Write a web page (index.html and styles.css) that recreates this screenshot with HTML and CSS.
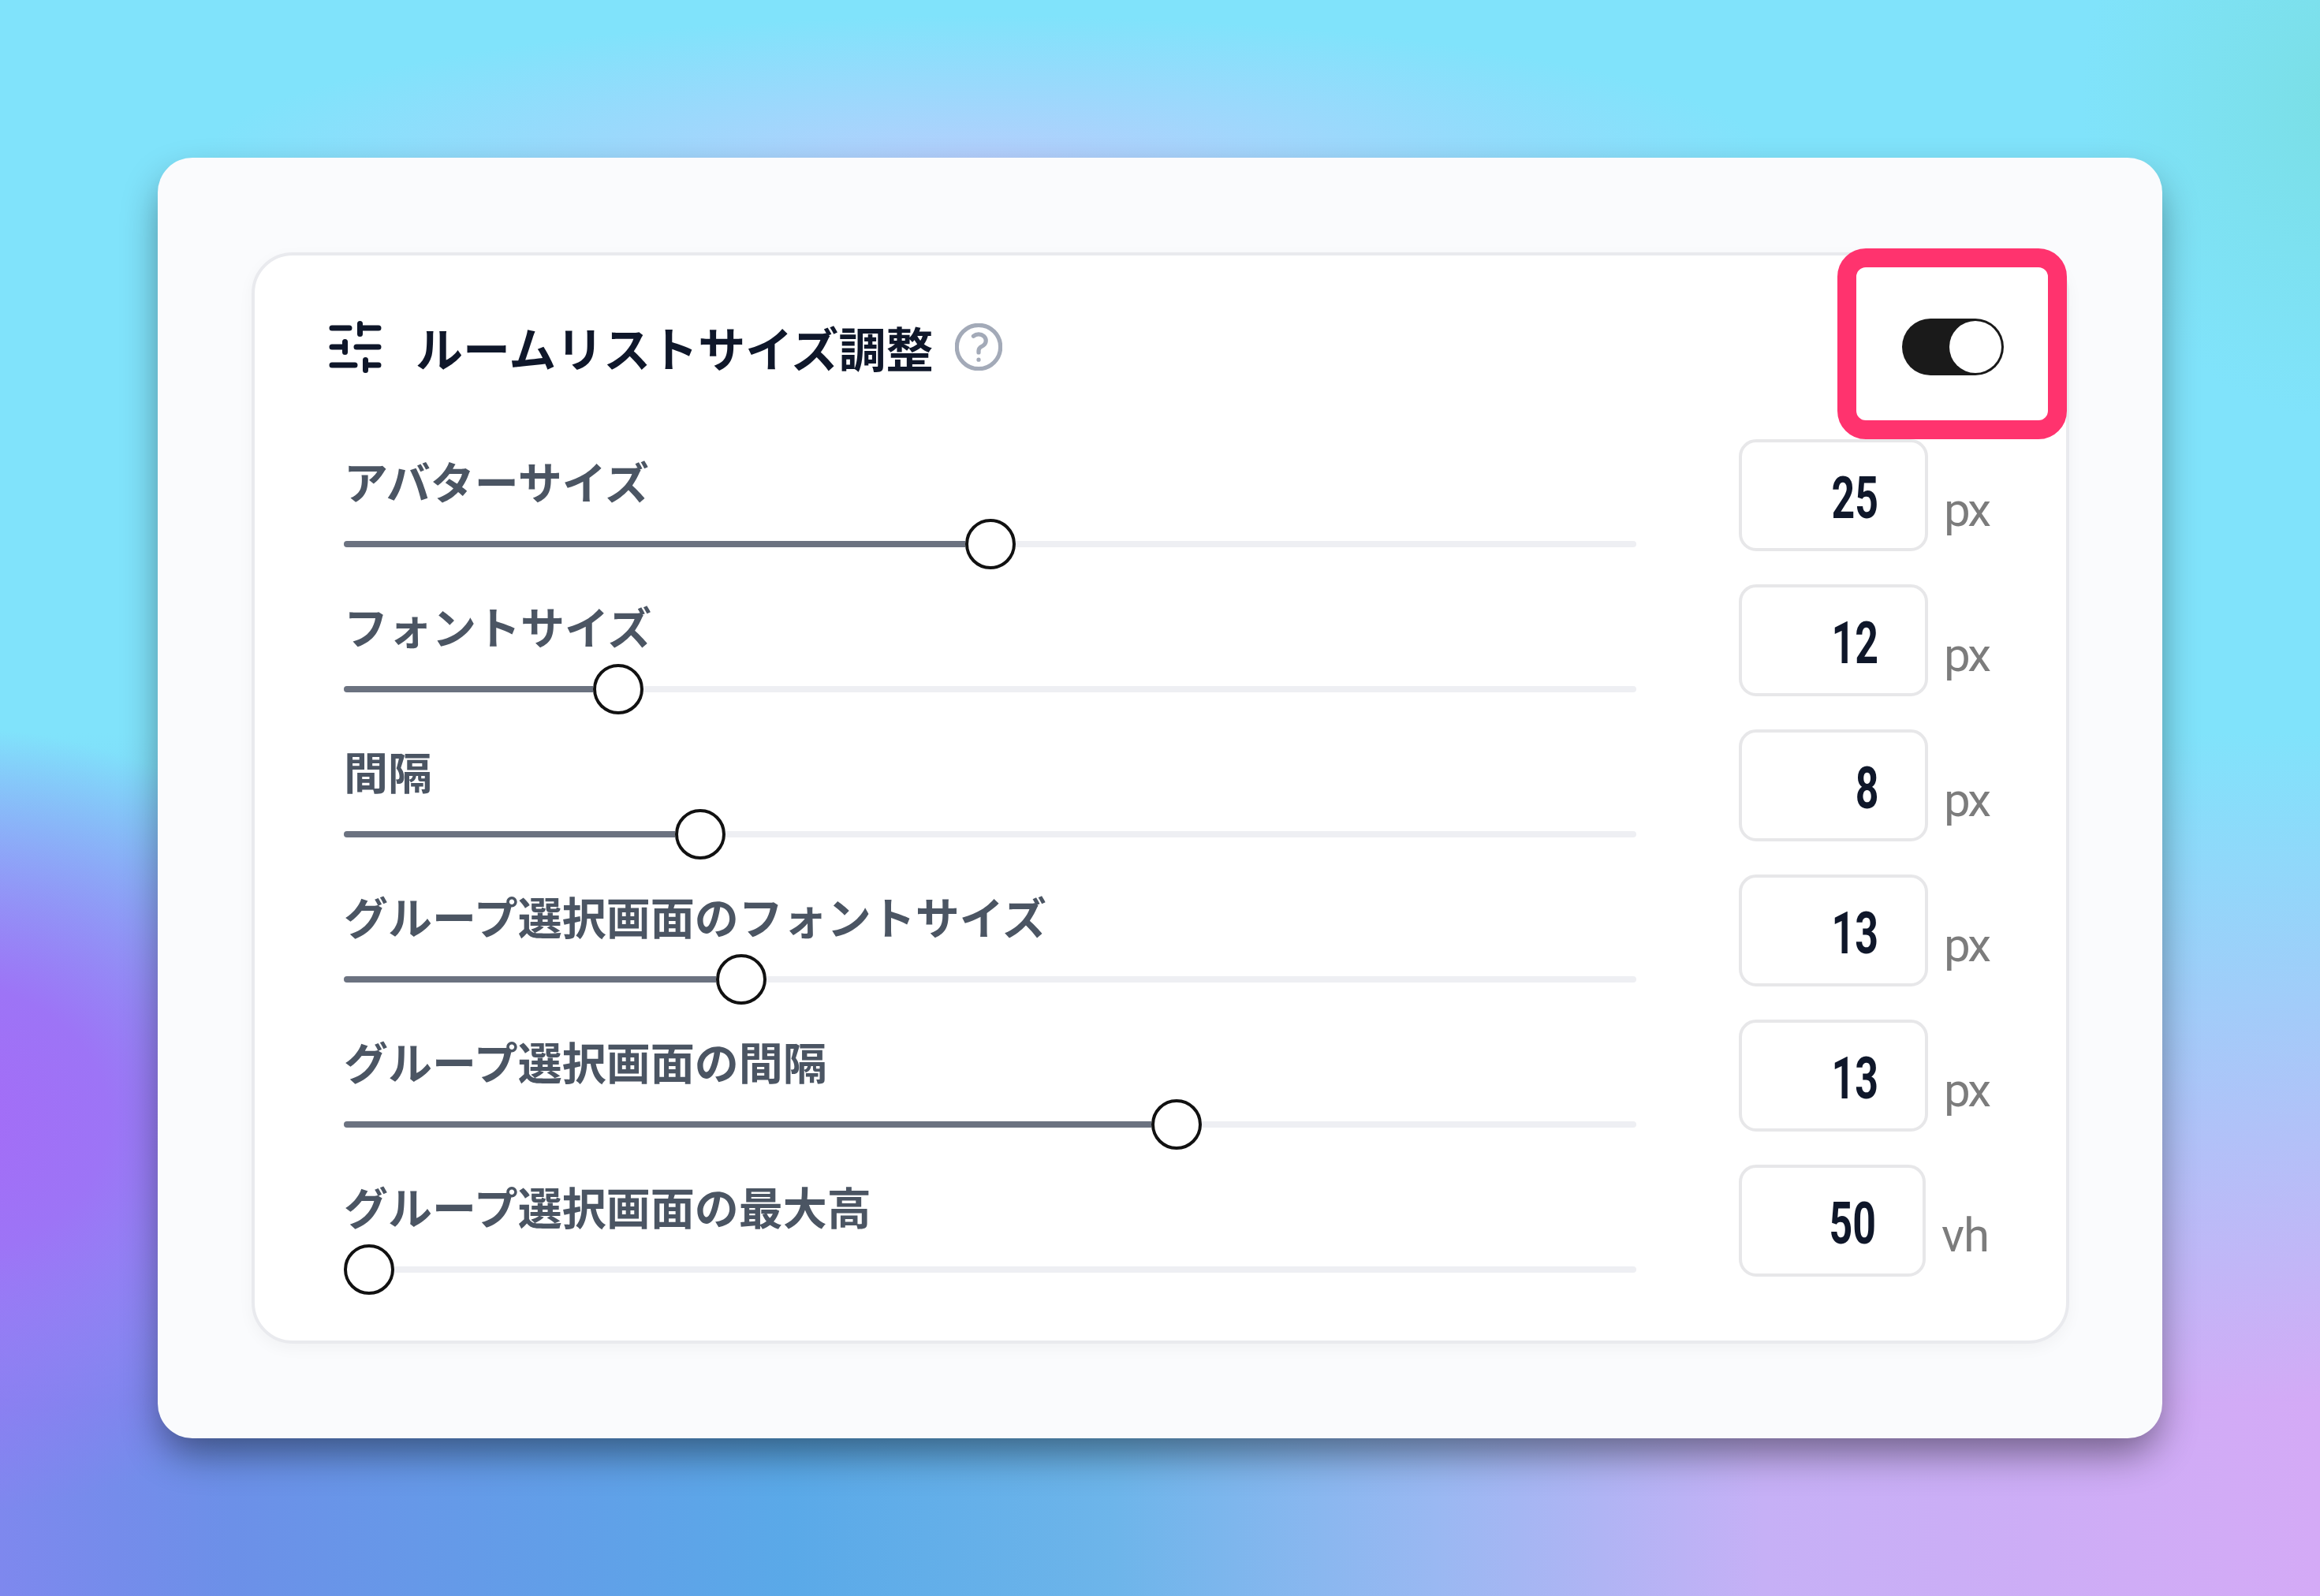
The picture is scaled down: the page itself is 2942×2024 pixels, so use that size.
FILE: index.html
```html
<!DOCTYPE html>
<html lang="ja">
<head>
    <meta charset="UTF-8">
    <title>ルームリストサイズ調整</title>
    <link rel="stylesheet" href="styles.css">
</head>
<body>
    <div class="card">
        <div class="panel">
            <div class="panel-header">
                <div class="panel-title">
                    <svg class="tune-icon" viewBox="0 0 66 66" fill="none" stroke="#0f172a" stroke-width="7" stroke-linecap="round">
                        <path d="M3.5 9H25.5M39 3.5V16.5M39 9H62.5"/>
                        <path d="M3.5 33H20M20 26.5V39.5M34.5 33H62.5"/>
                        <path d="M3.5 56H32.5M46 49.5V62.5M46 56H62.5"/>
                    </svg>
                    <h1>ルームリストサイズ調整</h1>
                    <svg class="help-icon" viewBox="2.25 2.25 19.5 19.5" fill="none" stroke="#a3aab8" stroke-width="1.7" stroke-linecap="round" stroke-linejoin="round">
                        <path d="M9.879 7.519c1.171-1.025 3.071-1.025 4.242 0 1.172 1.025 1.172 2.687 0 3.712-.203.179-.43.326-.67.442-.745.361-1.45.999-1.45 1.827v.75M21 12a9 9 0 1 1-18 0 9 9 0 0 1 18 0Zm-9 5.25h.008v.008H12v-.008Z"/>
                    </svg>
                </div>
                <div class="toggle"><div class="toggle-knob"></div></div>
            </div>
            <div class="highlight"></div>

            <div class="rows">
                <div class="row">
                    <div class="slider-col">
                        <div class="row-label">アバターサイズ</div>
                        <div class="slider"><div class="track">
                            <div class="fill" style="width: 48.05%"></div><div class="thumb"></div>
                        </div></div>
                    </div>
                    <div class="value-col">
                        <div class="value-box"><span class="value-num">25</span></div>
                        <span class="unit">px</span>
                    </div>
                </div>
                <div class="row">
                    <div class="slider-col">
                        <div class="row-label">フォントサイズ</div>
                        <div class="slider"><div class="track">
                            <div class="fill" style="width: 19.3%"></div><div class="thumb"></div>
                        </div></div>
                    </div>
                    <div class="value-col">
                        <div class="value-box"><span class="value-num">12</span></div>
                        <span class="unit">px</span>
                    </div>
                </div>
                <div class="row">
                    <div class="slider-col">
                        <div class="row-label">間隔</div>
                        <div class="slider"><div class="track">
                            <div class="fill" style="width: 25.6%"></div><div class="thumb"></div>
                        </div></div>
                    </div>
                    <div class="value-col">
                        <div class="value-box"><span class="value-num">8</span></div>
                        <span class="unit">px</span>
                    </div>
                </div>
                <div class="row">
                    <div class="slider-col">
                        <div class="row-label">グループ選択画面のフォントサイズ</div>
                        <div class="slider"><div class="track">
                            <div class="fill" style="width: 28.8%"></div><div class="thumb"></div>
                        </div></div>
                    </div>
                    <div class="value-col">
                        <div class="value-box"><span class="value-num">13</span></div>
                        <span class="unit">px</span>
                    </div>
                </div>
                <div class="row">
                    <div class="slider-col">
                        <div class="row-label">グループ選択画面の間隔</div>
                        <div class="slider"><div class="track">
                            <div class="fill" style="width: 62.5%"></div><div class="thumb"></div>
                        </div></div>
                    </div>
                    <div class="value-col">
                        <div class="value-box"><span class="value-num">13</span></div>
                        <span class="unit">px</span>
                    </div>
                </div>
                <div class="row">
                    <div class="slider-col">
                        <div class="row-label">グループ選択画面の最大高</div>
                        <div class="slider"><div class="track">
                            <div class="fill" style="width: 0%"></div><div class="thumb"></div>
                        </div></div>
                    </div>
                    <div class="value-col">
                        <div class="value-box"><span class="value-num">50</span></div>
                        <span class="unit unit-wide">vh</span>
                    </div>
                </div>
            </div>
        </div>
    </div>
</body>
</html>
```

FILE: styles.css
```css
* {
    margin: 0;
    padding: 0;
    box-sizing: border-box;
    font-family: "Noto Sans CJK JP", Roboto, sans-serif;
}

body {
    width: 2942px;
    height: 2024px;
    padding: 200px;
    overflow: hidden;
    background-image:
        radial-gradient(ellipse 1000px 190px at 1250px 210px, #b6cefd 0%, rgba(182, 206, 253, 0) 100%),
        radial-gradient(ellipse 320px 400px at 2960px 130px, #7adfe6 0%, rgba(122, 223, 230, 0) 100%),
        radial-gradient(ellipse 620px 500px at -80px 1420px, #a56bf7 0%, #9d74f6 35%, rgba(157, 116, 246, 0) 100%),
        linear-gradient(to bottom, #80e3fb 0, #80e3fb 930px, rgba(128, 227, 251, 0) 1780px),
        linear-gradient(to right, #7e88ee 0, #6c90e8 10%, #5aa9e8 34%, #6db5ea 48%, #9ab8f2 62%, #c6b0f6 76%, #d4aaf6 100%);
}

.card {
    width: 2542px;
    height: 1624px;
    padding: 120px 118px 120px 119px;
    background-color: #fafbfd;
    border-radius: 44px;
    box-shadow: 0 24px 50px -6px rgba(0, 0, 0, 0.46);
}

.panel {
    position: relative;
    height: 1384px;
    padding: 80px 0 58px;
    background-color: #fff;
    border: 4px solid #e9eaee;
    border-radius: 52px;
    box-shadow: 0 6px 20px rgba(0, 0, 0, 0.04);
}

.panel-header {
    display: flex;
    align-items: center;
    justify-content: space-between;
    height: 72px;
    padding: 0 79px 0 94px;
    margin-bottom: 81px;
}

.panel-title {
    display: flex;
    align-items: center;
}

.tune-icon {
    width: 67px;
    height: 66px;
    margin-right: 43px;
}

h1 {
    font-size: 60px;
    font-weight: 700;
    line-height: 78px;
    color: #0f172a;
}

.help-icon {
    width: 60px;
    height: 60px;
    margin-left: 28px;
}

.toggle {
    display: flex;
    justify-content: flex-end;
    align-items: center;
    width: 129px;
    height: 72px;
    padding: 3px;
    background-color: #1a1a1a;
    border-radius: 36px;
}

.toggle-knob {
    width: 66px;
    height: 66px;
    background-color: #fff;
    border-radius: 50%;
}

.highlight {
    position: absolute;
    top: -9px;
    right: -1px;
    width: 291px;
    height: 242px;
    border: 24px solid #ff336e;
    border-radius: 36px;
}

.rows {
    display: flex;
    flex-direction: column;
    gap: 19px;
    padding: 0 98px 0 113px;
}

.row {
    display: flex;
    justify-content: space-between;
    align-items: flex-start;
}

.slider-col {
    width: 1639px;
    padding-top: 13px;
}

.row-label {
    font-size: 56px;
    font-weight: 700;
    line-height: 78px;
    color: #4b5563;
}

.slider {
    display: flex;
    align-items: center;
    height: 64px;
    margin-top: 10px;
}

.track {
    display: flex;
    align-items: center;
    width: 100%;
    height: 8px;
    background-color: #eeeff3;
    border-radius: 4px;
}

.fill {
    height: 8px;
    background-color: #6b7280;
    border-radius: 4px 0 0 4px;
}

.thumb {
    flex: none;
    width: 64px;
    height: 64px;
    background-color: #fff;
    border: 4px solid #111;
    border-radius: 50%;
}

.value-col {
    display: flex;
    gap: 20px;
    width: 317px;
}

.value-box {
    flex: 1;
    display: flex;
    justify-content: flex-end;
    align-items: center;
    height: 142px;
    padding: 7px 59px 0 0;
    background-color: #fff;
    border: 4px solid #e7e7e9;
    border-radius: 22px;
}

.value-num {
    display: inline-block;
    font-family: Roboto, sans-serif;
    font-size: 74px;
    font-weight: 700;
    line-height: 1;
    color: #0f172a;
    transform: scaleX(0.7);
    transform-origin: right center;
}

.unit {
    flex: none;
    margin-top: 60px;
    font-family: Roboto, sans-serif;
    font-size: 60px;
    line-height: 60px;
    letter-spacing: -3px;
    color: #7c7c7c;
}

.unit-wide {
    letter-spacing: -1px;
}
```
